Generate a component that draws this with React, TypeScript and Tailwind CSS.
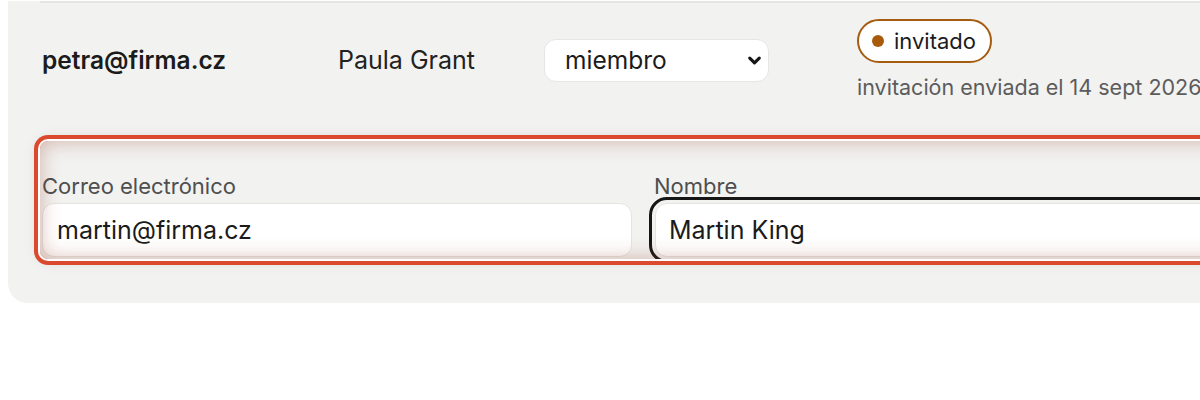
import { ChevronDown } from 'lucide-react'

export default function App() {
  return (
    <div className="w-full h-[400px] overflow-hidden bg-white font-['Inter',sans-serif] text-[#1b1b1b]">
      <div className="ml-[8px] w-[1400px] h-[302px] rounded-b-[20px] bg-[#f2f2f0] pl-[32px]">
        {/* existing member row */}
        <div className="mt-px border-t-2 border-[#e5e5e3] pt-[16px] pb-[40px] pl-[2px] flex items-center">
          <div className="w-[296px] text-[24.5px] font-semibold leading-[32px]">petra@firma.cz</div>
          <div className="w-[206px] text-[25px] leading-[32px] text-[#222]">Paula Grant</div>
          <div className="w-[313px]">
            <div className="relative w-[225px]">
              <select
                defaultValue="miembro"
                className="appearance-none w-full h-[43px] rounded-[12px] border border-[#e6e6e4] bg-white pl-[20px] pr-[40px] text-[24.5px] leading-[28px] text-[#1b1b1b]"
              >
                <option>miembro</option>
                <option>administrador</option>
              </select>
              <ChevronDown
                className="absolute right-[5px] top-[12px] pointer-events-none text-[#161616]"
                size={19}
                strokeWidth={4}
              />
            </div>
          </div>
          <div className="flex flex-col items-start">
            <span className="h-[44px] inline-flex items-center gap-[10px] rounded-full border-2 border-[#a55b10] bg-white pl-[13px] pr-[14px] text-[22px] leading-[28px] text-[#1b1b1b]">
              <span className="w-[12px] h-[12px] rounded-full bg-[#a85a0c]" />
              invitado
            </span>
            <span className="mt-[10px] text-[21.5px] leading-[28px] text-[#5c5c5c] whitespace-nowrap">
              invitación enviada el 14 sept 2026
            </span>
          </div>
        </div>

        {/* new invite row, highlighted */}
        <div className="relative h-[118px] overflow-hidden rounded-[8px] ring-4 ring-[#db4a2e] ring-offset-2 ring-offset-white shadow-[0_0_16px_rgba(0,0,0,0.16)] pt-[31px] pl-[2px]">
          <div className="grid grid-cols-[590px_590px] gap-x-[22px]">
            <label className="flex flex-col">
              <span className="text-[22px] leading-[28px] text-[#4e4e4e]">Correo electrónico</span>
              <input
                defaultValue="martin@firma.cz"
                className="mt-[3px] h-[54px] rounded-[12px] border border-[#e4e4e2] bg-white px-[14px] text-[25px] text-[#1b1b1b] outline-none"
              />
            </label>
            <label className="flex flex-col">
              <span className="text-[22px] leading-[28px] text-[#4e4e4e]">Nombre</span>
              <input
                defaultValue="Martin King"
                className="mt-[3px] ml-px h-[54px] rounded-[12px] border border-[#e4e4e2] bg-white px-[13px] text-[25px] text-[#1b1b1b] outline-3 outline-offset-[3px] outline-[#161616]"
              />
            </label>
          </div>
          <div className="absolute inset-0 rounded-[8px] pointer-events-none shadow-[inset_0_0_20px_rgba(150,60,40,0.36)]" />
        </div>
      </div>
    </div>
  )
}
